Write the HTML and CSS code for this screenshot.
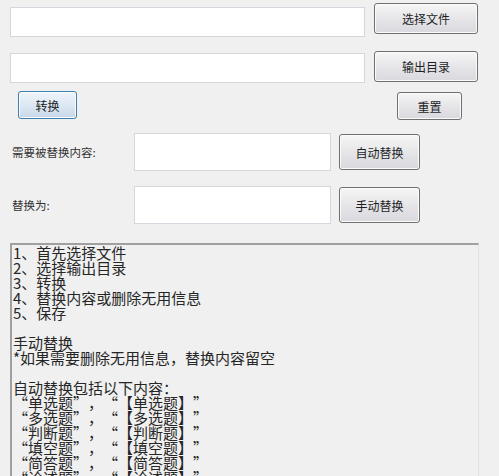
FILE: index.html
```html
<!DOCTYPE html>
<html lang="zh-CN">

<head>
    <meta charset="UTF-8">
    <meta name="viewport" content="width=device-width, initial-scale=1.0">
    <title>题目转换</title>
    <link rel="stylesheet" href="styles.css">
</head>

<body>
    <main class="app">
        <div class="row row-file">
            <input type="text" class="path-input">
            <button class="btn btn-wide">选择文件</button>
        </div>

        <div class="row row-output">
            <input type="text" class="path-input">
            <button class="btn btn-wide">输出目录</button>
        </div>

        <div class="row row-actions">
            <button class="btn btn-default btn-convert">转换</button>
            <button class="btn btn-reset">重置</button>
        </div>

        <div class="row row-replace">
            <label class="field-label">需要被替换内容:</label>
            <input type="text" class="replace-input">
            <button class="btn btn-replace">自动替换</button>
        </div>

        <div class="row row-with">
            <label class="field-label">替换为:</label>
            <input type="text" class="replace-input">
            <button class="btn btn-replace">手动替换</button>
        </div>

        <div class="log-box">1、首先选择文件
2、选择输出目录
3、转换
4、替换内容或删除无用信息
5、保存

手动替换
*如果需要删除无用信息，替换内容留空

自动替换包括以下内容：
<span class="full">“单选题”，“【单选题】”
“多选题”，“【多选题】”
“判断题”，“【判断题】”
“填空题”，“【填空题】”
“简答题”，“【简答题】”
“论述题”，“【论述题】”</span></div>
    </main>
</body>

</html>
```

FILE: styles.css
```css
* {
    margin: 0;
    padding: 0;
    box-sizing: border-box;
}

body {
    background-color: #f0f0f0;
    font-family: "Noto Sans CJK SC", sans-serif;
    color: #222222;
    height: 476px;
    overflow: hidden;
}

.app {
    display: flex;
    flex-direction: column;
}

.row {
    display: flex;
    align-items: flex-start;
}

/* file / output rows */
.row-file {
    margin-top: 3px;
    padding-left: 10px;
    gap: 9px;
}

.row-output {
    margin-top: 14px;
    padding-left: 10px;
    gap: 9px;
}

.path-input {
    width: 355px;
    height: 30px;
    background: #ffffff;
    border: 1px solid #d6d6de;
    outline: none;
}

.row-file .path-input {
    margin-top: 4px;
}

.row-output .path-input {
    margin-top: 2px;
}

.btn {
    font-family: "Noto Sans CJK SC", sans-serif;
    font-size: 12px;
    color: #1e1e1e;
    background: linear-gradient(#f6f6f6, #e6e6e9 50%, #d8d8de);
    border: 1px solid #707070;
    border-radius: 3px;
    box-shadow: inset 0 0 0 1px #fbfbfb;
    cursor: pointer;
}

.btn-wide {
    width: 104px;
    height: 31px;
}

/* convert / reset row */
.row-actions {
    margin-top: 8px;
    padding-left: 18px;
    padding-right: 37px;
    justify-content: space-between;
}

.btn-convert {
    width: 59px;
    height: 28px;
}

.btn-default {
    border-color: #3c7fb1;
    background: linear-gradient(#eef4fa, #dde8f3 50%, #c9d7e8);
}

.btn-reset {
    width: 65px;
    height: 28px;
    margin-top: 1px;
}

/* replace rows */
.row-replace {
    margin-top: 13px;
}

.row-with {
    margin-top: 15px;
}

.field-label {
    width: 134px;
    padding-left: 12px;
    font-size: 11.5px;
    line-height: 38px;
    color: #333333;
}

.replace-input {
    width: 197px;
    height: 38px;
    background: #ffffff;
    border: 1px solid #d6d6de;
    outline: none;
}

.btn-replace {
    width: 81px;
    height: 36px;
    margin-left: 8px;
    margin-top: 1px;
}

/* read-only log */
.log-box {
    margin-top: 19px;
    margin-left: 10px;
    width: 469px;
    height: 260px;
    padding-left: 1px;
    border-top: 2px solid #a0a0a0;
    border-left: 2px solid #a0a0a0;
    border-right: 1px solid #e2e2e2;
    background-color: #f0f0f0;
    font-size: 15px;
    line-height: 15px;
    color: #262626;
    white-space: pre;
    overflow: hidden;
    text-spacing-trim: space-all;
}

.full {
    font-feature-settings: "fwid" 1;
}
```
